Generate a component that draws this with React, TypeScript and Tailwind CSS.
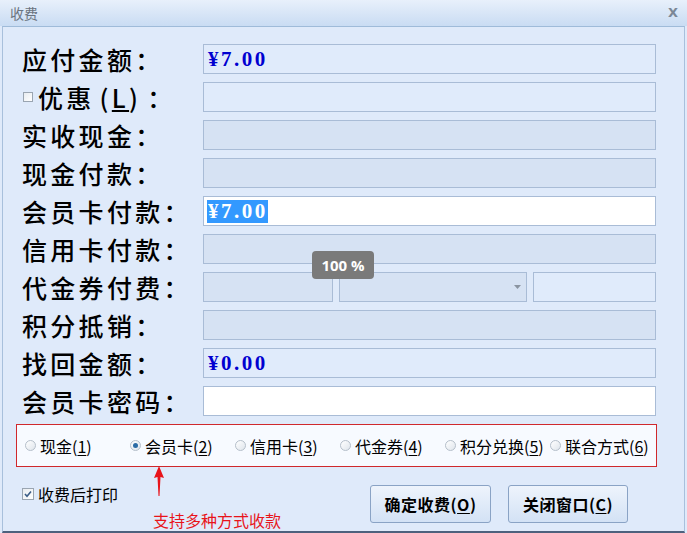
import React from "react";

const cjk = { fontFamily: '"Noto Sans CJK SC", "Noto Sans", sans-serif' };
const serif = { fontFamily: '"Liberation Serif", "DejaVu Serif", serif' };

function Field({
  kind,
  className = "",
  children,
}: {
  kind: "light" | "disabled" | "white";
  className?: string;
  children?: React.ReactNode;
}) {
  const bg =
    kind === "light" ? "bg-[#e0ebfb]" : kind === "disabled" ? "bg-[#d6e2f3]" : "bg-white";
  return (
    <div
      className={`h-[30px] border border-[#a9bcd6] ${bg} flex items-center pl-[3px] relative ${className}`}
    >
      {children}
    </div>
  );
}

function Money({ v, selected }: { v: string; selected?: boolean }) {
  return (
    <span
      style={serif}
      className={`text-[21px] font-bold leading-[23px] tracking-[2.5px] pl-[1px] ${
        selected ? "bg-[#3399ff] text-white" : "text-[#0000d0]"
      }`}
    >
      {v}
    </span>
  );
}

function Label({ children }: { children: React.ReactNode }) {
  return (
    <div className="h-[30px] flex items-center text-[25px] font-medium tracking-[3.3px] text-black leading-none whitespace-nowrap">
      {children}
    </div>
  );
}

function Radio({ checked, text, k }: { checked?: boolean; text: string; k: string }) {
  return (
    <div className="flex items-center h-[20px]">
      <span
        className={`w-[11px] h-[11px] rounded-full border border-[#b5bfca] bg-gradient-to-br from-white to-[#dfe5ec] flex items-center justify-center mr-[4px]`}
      >
        {checked && <span className="w-[5px] h-[5px] rounded-full bg-[#2b6ba5]" />}
      </span>
      <span className="text-[16px] text-black leading-none">
        {text}(<span className="underline underline-offset-2">{k}</span>)
      </span>
    </div>
  );
}

export default function App() {
  return (
    <div className="w-[687px] h-[533px] bg-[#dfeafa] flex flex-col overflow-hidden" style={cjk}>
      {/* title bar */}
      <div className="h-[26px] bg-gradient-to-b from-[#e8f0fb] to-[#c9dcf3] flex items-center justify-between pl-[10px] pr-[9px] shrink-0">
        <span className="text-[14px] text-[#6b7480]">收费</span>
        <span
          className="text-[13px] font-bold text-[#7b8796]"
          style={{ fontFamily: '"DejaVu Sans", sans-serif' }}
        >
          X
        </span>
      </div>
      {/* body */}
      <div className="flex-1 mx-[2px] border border-t-[#9fbbd9] border-x-[#a8c0dc] border-b-[2px] border-b-[#4d617d] bg-[#dfeafa] flex flex-col relative">
        <div className="grid grid-cols-[181px_453px] gap-y-[8px] pl-[19px] pt-[17px]">
          <Label>应付金额：</Label>
          <Field kind="light">
            <Money v="¥7.00" />
          </Field>

          <Label>
            <span className="w-[10px] h-[10px] border border-[#9aa5b1] bg-gradient-to-br from-[#e8ecf0] to-[#ffffff] mr-[5px] ml-[1px]" />
            优惠
            <span className="ml-[5px] mr-[6px]">
              (<span className="underline underline-offset-2">L</span>)
            </span>
            ：
          </Label>
          <Field kind="light" />

          <Label>实收现金：</Label>
          <Field kind="disabled" />

          <Label>现金付款：</Label>
          <Field kind="disabled" />

          <Label>会员卡付款：</Label>
          <Field kind="white">
            <Money v="¥7.00" selected />
          </Field>

          <Label>信用卡付款：</Label>
          <Field kind="disabled" />

          <Label>代金券付费：</Label>
          <div className="flex gap-[6px]">
            <Field kind="disabled" className="w-[130px]" />
            <Field kind="disabled" className="w-[188px] justify-end pr-[5px]">
              <svg width="7" height="4" viewBox="0 0 7 4">
                <path d="M0 0 L7 0 L3.5 4 Z" fill="#8a94a0" />
              </svg>
            </Field>
            <Field kind="light" className="flex-1" />
          </div>

          <Label>积分抵销：</Label>
          <Field kind="disabled" />

          <Label>找回金额：</Label>
          <Field kind="light">
            <Money v="¥0.00" />
          </Field>

          <Label>会员卡密码：</Label>
          <Field kind="white" />
        </div>

        {/* tooltip */}
        <div
          className="absolute left-[309px] top-[224px] w-[62px] h-[28px] rounded-[4px] bg-[#7a7a7a] text-white font-bold text-[15px] flex items-center justify-center"
          style={{ fontFamily: '"Open Sans", "DejaVu Sans", sans-serif' }}
        >
          100 %
        </div>

        {/* radio group */}
        <div className="ml-[13px] mt-[8px] w-[641px] h-[43px] border border-[#d0282c] bg-[#f7faff] grid grid-cols-[105px_105px_105px_105px_105px_105px] items-center pl-[8px]">
          <Radio text="现金" k="1" />
          <Radio text="会员卡" k="2" checked />
          <Radio text="信用卡" k="3" />
          <Radio text="代金券" k="4" />
          <Radio text="积分兑换" k="5" />
          <Radio text="联合方式" k="6" />
        </div>

        {/* bottom row */}
        <div className="flex items-start mt-[18px] pl-[19px] pr-[56px]">
          <div className="flex items-center mt-[1px]">
            <span className="w-[12px] h-[12px] border border-[#9aa5b1] bg-gradient-to-br from-[#e8ecf0] to-white flex items-center justify-center mr-[4px]">
              <svg width="8" height="8" viewBox="0 0 8 8">
                <path d="M1 4 L3 6.2 L7 1.5" stroke="#3a5c86" strokeWidth="1.6" fill="none" />
              </svg>
            </span>
            <span className="text-[16px] text-black leading-none">收费后打印</span>
          </div>
          <div className="ml-auto flex gap-[17px]">
            <button className="w-[121px] h-[38px] rounded-[3px] border border-[#8aa3c5] bg-gradient-to-b from-[#eef4fc] to-[#d3e2f5] text-[16px] tracking-[0.5px] font-bold text-black">
              确定收费(<span className="underline underline-offset-2">O</span>)
            </button>
            <button className="w-[120px] h-[38px] rounded-[3px] border border-[#8aa3c5] bg-gradient-to-b from-[#eef4fc] to-[#d3e2f5] text-[16px] tracking-[0.5px] font-bold text-black">
              关闭窗口(<span className="underline underline-offset-2">C</span>)
            </button>
          </div>
        </div>

        {/* annotation */}
        <svg className="absolute left-[148px] top-[439px]" width="16" height="32" viewBox="0 0 16 32">
          <path d="M8 0 L13 12 L9.5 11 L8.5 30 L7.5 30 L6.5 11 L3 12 Z" fill="#e8141a" />
        </svg>
        <div className="absolute left-[150px] top-[485px] text-[16px] leading-none text-[#e8141a]">
          支持多种方式收款
        </div>
      </div>
    </div>
  );
}
